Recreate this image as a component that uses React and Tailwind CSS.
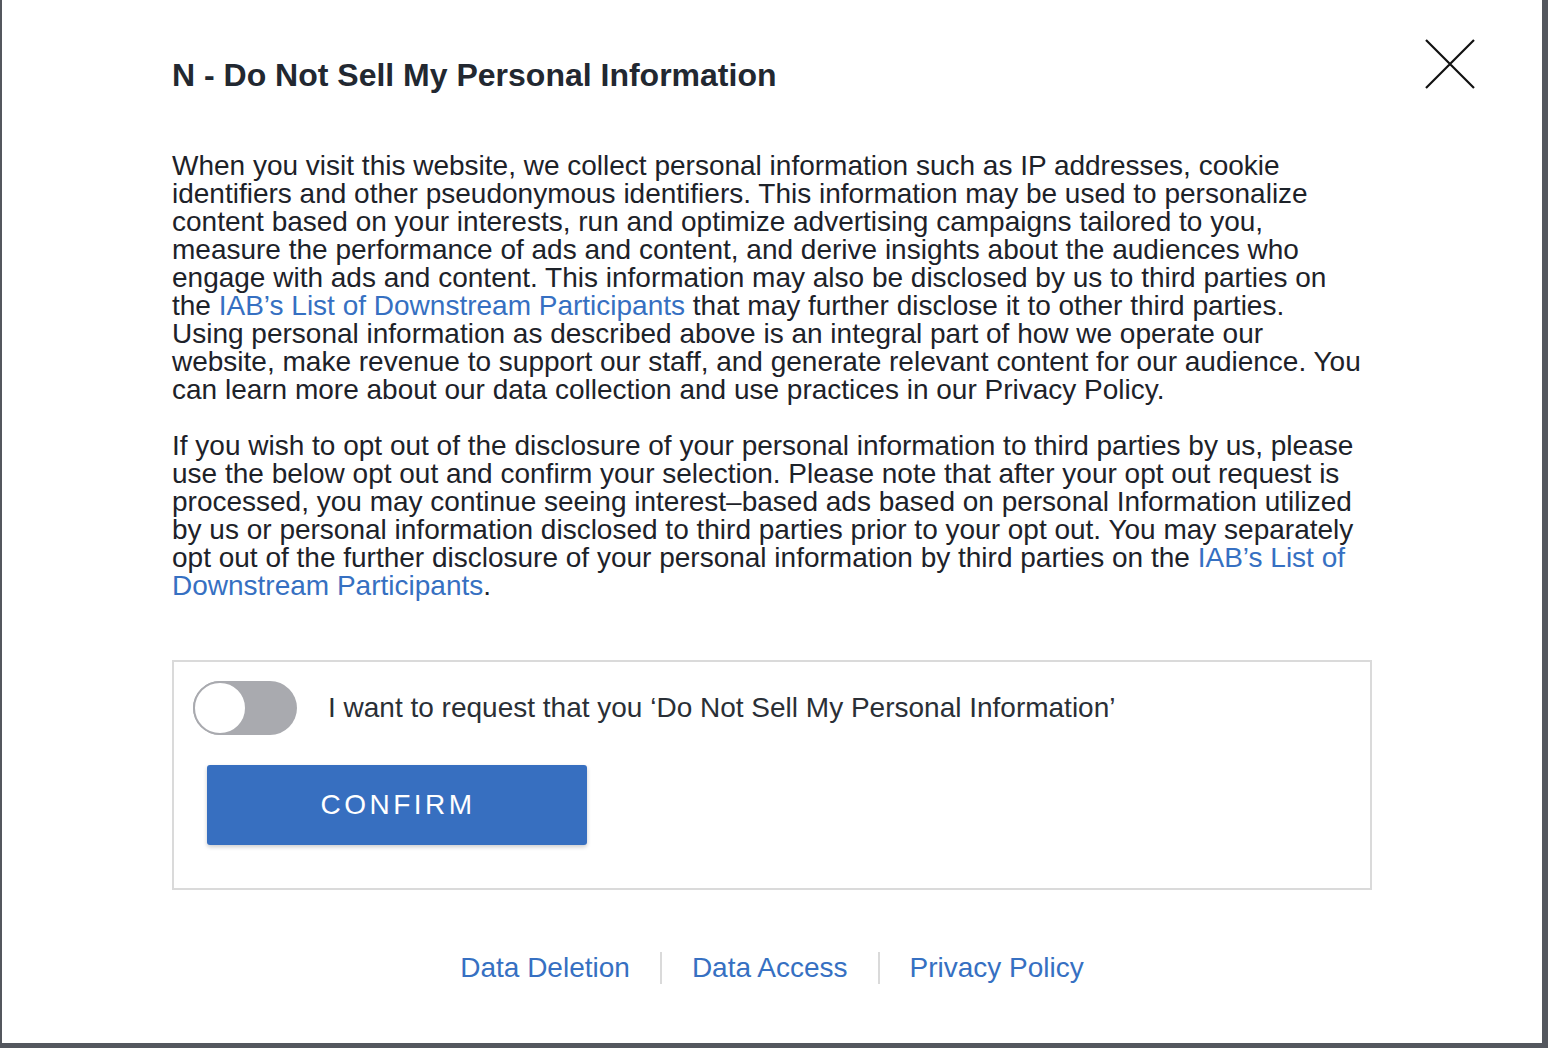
import { useState } from 'react';

const font = { fontFamily: '"Liberation Sans", Arial, Helvetica, sans-serif' };

function Link({ children }) {
  return <a className="text-[#3670c2]">{children}</a>;
}

function CloseIcon() {
  return (
    <svg width="50" height="50" viewBox="0 0 50 50" className="block">
      <path d="M1 1 L49 49 M49 1 L1 49" stroke="#111" strokeWidth="2.2" fill="none" />
    </svg>
  );
}

function Toggle({ on, onChange }) {
  return (
    <button
      onClick={() => onChange(!on)}
      className={`relative h-[54px] w-[104px] shrink-0 rounded-full ${on ? 'bg-[#3670c2]' : 'bg-[#a9aaaf]'}`}
    >
      <span
        className={`absolute top-0 h-[54px] w-[54px] rounded-full border-2 border-[#a9aaaf] bg-white ${on ? 'left-[50px]' : 'left-0'}`}
      />
    </button>
  );
}

export default function App() {
  const [optOut, setOptOut] = useState(false);

  return (
    <div className="h-[1048px] w-full bg-[#54575e] pb-[5px] pl-[2px] pr-[6px]" style={font}>
      <div className="relative h-full w-full bg-white">
        <button className="absolute right-[67px] top-[39px]">
          <CloseIcon />
        </button>

        <div className="mx-auto w-[1200px] pt-[55px] text-[#1d2229]">
          <h1 className="text-[32px] font-bold leading-[40px] text-[#222831]">
            N - Do Not Sell My Personal Information
          </h1>

          <div className="mt-[57px] w-[1195px] text-[28px] leading-[28px]">
            <p>
              When you visit this website, we collect personal information such as IP addresses, cookie identifiers
              and other pseudonymous identifiers. This information may be used to personalize content based on your
              interests, run and optimize advertising campaigns tailored to you, measure the performance of ads and
              content, and derive insights about the audiences who engage with ads and content. This information may
              also be disclosed by us to third parties on the <Link>IAB’s List of Downstream Participants</Link> that
              may further disclose it to other third parties.
              <br />
              Using personal information as described above is an integral part of how we operate our website, make
              revenue to support our staff, and generate relevant content for our audience. You can learn more about
              our data collection and use practices in our Privacy Policy.
            </p>
            <p className="mt-[28px]">
              If you wish to opt out of the disclosure of your personal information to third parties by us, please use
              the below opt out and confirm your selection. Please note that after your opt out request is processed,
              you may continue seeing interest–based ads based on personal Information utilized by us or personal
              information disclosed to third parties prior to your opt out. You may separately opt out of the further
              disclosure of your personal information by third parties on the{' '}
              <Link>IAB’s List of Downstream Participants</Link>.
            </p>
          </div>

          <div className="mt-[60px] h-[230px] border-2 border-[#dadada] p-[19px]">
            <div className="flex items-center">
              <Toggle on={optOut} onChange={setOptOut} />
              <span className="ml-[31px] text-[28px] leading-[30px] text-[#2a2f36]">
                I want to request that you ‘Do Not Sell My Personal Information’
              </span>
            </div>
            <button className="ml-[14px] mt-[30px] flex h-[80px] w-[380px] items-center justify-center rounded-[3px] bg-[#376fc0] pl-[2px] text-[28px] tracking-[3.5px] text-white shadow-[0_2px_4px_rgba(0,0,0,0.2)]">
              CONFIRM
            </button>
          </div>

          <div className="mt-[62px] flex items-center justify-center text-[28px] leading-[32px] text-[#3670c2]">
            <a>Data Deletion</a>
            <span className="mx-[30px] h-[32px] w-[2px] bg-[#dadada]" />
            <a>Data Access</a>
            <span className="mx-[30px] h-[32px] w-[2px] bg-[#dadada]" />
            <a>Privacy Policy</a>
          </div>
        </div>
      </div>
    </div>
  );
}
